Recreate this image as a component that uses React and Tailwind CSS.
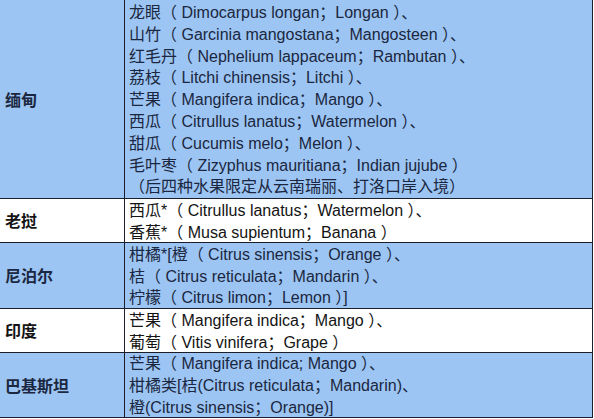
import React from "react";

const rows = [
  {
    name: "缅甸",
    blue: true,
    h: "h-[199px]",
    lines: [
      "龙眼（ Dimocarpus longan；Longan ）、",
      "山竹（ Garcinia mangostana；Mangosteen ）、",
      "红毛丹（ Nephelium lappaceum；Rambutan ）、",
      "荔枝（ Litchi chinensis；Litchi ）、",
      "芒果（ Mangifera indica；Mango ）、",
      "西瓜（ Citrullus lanatus；Watermelon ）、",
      "甜瓜（ Cucumis melo；Melon ）、",
      "毛叶枣（ Zizyphus mauritiana；Indian jujube ）",
      "（后四种水果限定从云南瑞丽、打洛口岸入境）",
    ],
  },
  {
    name: "老挝",
    blue: false,
    h: "h-[44px]",
    lines: [
      "西瓜*（ Citrullus lanatus；Watermelon ）、",
      "香蕉*（ Musa supientum；Banana ）",
    ],
  },
  {
    name: "尼泊尔",
    blue: true,
    h: "h-[66px]",
    lines: [
      "柑橘*[橙（ Citrus sinensis；Orange ）、",
      "桔（ Citrus reticulata；Mandarin ）、",
      "柠檬（ Citrus limon；Lemon ）]",
    ],
  },
  {
    name: "印度",
    blue: false,
    h: "h-[44px]",
    lines: ["芒果（ Mangifera indica；Mango ）、", "葡萄（ Vitis vinifera；Grape ）"],
  },
  {
    name: "巴基斯坦",
    blue: true,
    h: "h-[65px]",
    lines: [
      "芒果（ Mangifera indica; Mango ）、",
      "柑橘类[桔(Citrus reticulata；Mandarin)、",
      "橙(Citrus sinensis；Orange)]",
    ],
  },
];

export default function App() {
  return (
    <div
      className="w-[594px] h-[419px] overflow-hidden bg-white"
      style={{ fontFamily: '"Liberation Sans", "Noto Sans CJK SC", sans-serif' }}
    >
      <div className="w-[593px] border-r border-[#1c1f2b]">
        {rows.map((r, i) => (
          <div
            key={i}
            className={`flex ${r.h} border-b border-[#1c1f2b] ${
              r.blue ? "bg-[#9cc5f3] text-[#1b2740]" : "bg-white text-[#141414]"
            }`}
          >
            <div className="w-[125px] shrink-0 border-r border-[#1c1f2b] flex items-center pl-[5px] pt-[3px] text-[16px] font-bold">
              {r.name}
            </div>
            <div className="flex-1 flex flex-col justify-center pl-[4px] pt-[2px] text-[16px] leading-[21.8px] whitespace-nowrap">
              {r.lines.map((l, j) => (
                <div key={j}>{l}</div>
              ))}
            </div>
          </div>
        ))}
      </div>
    </div>
  );
}
